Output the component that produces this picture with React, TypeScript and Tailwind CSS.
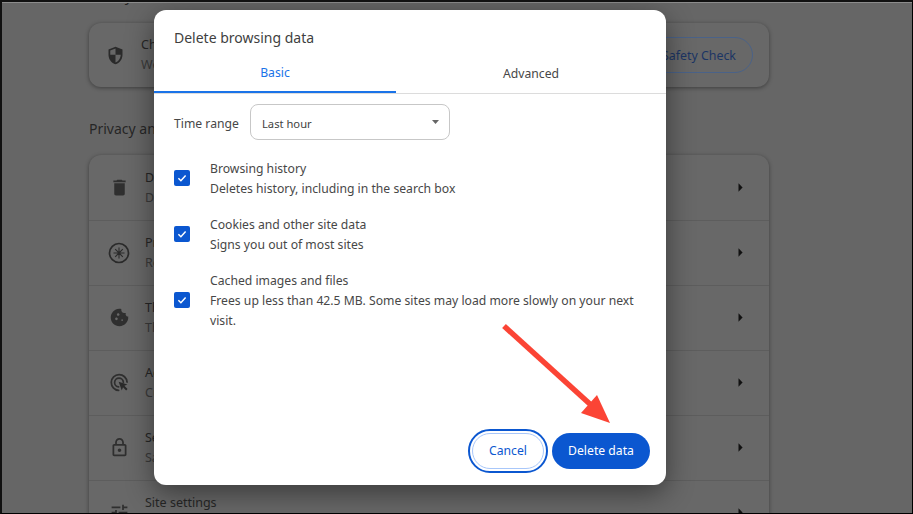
const font = "[font-family:'Noto_Sans','Liberation_Sans',sans-serif]";

function Chevron() {
  return (
    <svg width="5" height="9" viewBox="0 0 5 9" className="mb-px shrink-0">
      <path d="M0.5 0.3 L4.6 4.5 L0.5 8.7 Z" fill="#111111" />
    </svg>
  );
}

const iconPaths: Record<string, string> = {
  trash: "M6 19c0 1.1.9 2 2 2h8c1.1 0 2-.9 2-2V7H6v12zM19 4h-3.5l-1-1h-5l-1 1H5v2h14V4z",
  cookie:
    "M21.95 10.99c-1.79-.03-3.7-1.95-2.68-4.22-2.98 1-5.77-1.59-5.19-4.56C6.95.71 2 6.58 2 12c0 5.52 4.48 10 10 10 5.89 0 10.54-5.08 9.95-11.01zM8.5 15c-.83 0-1.5-.67-1.5-1.5S7.67 12 8.5 12s1.5.67 1.5 1.5S9.33 15 8.5 15zm2-5C9.67 10 9 9.33 9 8.5S9.67 7 10.5 7s1.5.67 1.5 1.5-.67 1.5-1.5 1.5zm4.5 6c-.55 0-1-.45-1-1s.45-1 1-1 1 .45 1 1-.45 1-1 1z",
  lock:
    "M18 8h-1V6c0-2.76-2.24-5-5-5S7 3.24 7 6v2H6c-1.1 0-2 .9-2 2v10c0 1.1.9 2 2 2h12c1.1 0 2-.9 2-2V10c0-1.1-.9-2-2-2zM9 6c0-1.66 1.34-3 3-3s3 1.34 3 3v2H9V6zm9 14H6V10h12v10zm-6-3c1.1 0 2-.9 2-2s-.9-2-2-2-2 .9-2 2 .9 2 2 2z",
  tune:
    "M3 17v2h6v-2H3zM3 5v2h10V5H3zm10 16v-2h8v-2h-8v-2h-2v6h2zM7 9v2H3v2h4v2h2V9H7zm14 4v-2H11v2h10zm-6-4h2V7h4V5h-4V3h-2v6z",
};

function Icon({ name }: { name: string }) {
  if (name === "shield") {
    return (
      <svg width="21" height="21" viewBox="0 0 24 24" fill="none" className="mx-[1.5px]">
        <path d="M12 2 4 5v6.1c0 5 3.4 9.7 8 10.9 4.6-1.2 8-5.9 8-10.9V5l-8-3z" fill="#2a2a2a" />
        <path d="M12 4.1 6 6.4V11h6V4.1zM12 11v8.9c3.2-1 5.6-4.6 6-8.9h-6z" fill="#666666" />
      </svg>
    );
  }
  if (name === "sandbox") {
    return (
      <svg width="24" height="24" viewBox="0 0 24 24" fill="none" stroke="#2a2a2a" className="mb-px">
        <circle cx="12" cy="12" r="9.5" strokeWidth="1.7" />
        <path d="M12 6.5v11M6.5 12h11M8.2 8.2l7.6 7.6M15.8 8.2l-7.6 7.6" strokeWidth="1.1" />
      </svg>
    );
  }
  if (name === "ads") {
    return (
      <svg width="21" height="21" viewBox="0 0 24 24" fill="none" className="mx-[1.5px] mb-px">
        <path
          d="M11 21a9 9 0 1 1 9.6-9.5M11 17a5 5 0 1 1 5.4-5.2"
          stroke="#2f2f2f"
          strokeWidth="2"
          strokeLinecap="round"
        />
        <path d="M11 11l3.6 10 1.4-3.6 3.6 3.6 1.6-1.6-3.6-3.6 3.4-1.4L11 11z" fill="#2a2a2a" />
      </svg>
    );
  }
  return (
    <svg width="21" height="21" viewBox="0 0 24 24" fill="#2f2f2f" className="mx-[1.5px] mb-px">
      <path d={iconPaths[name]} />
    </svg>
  );
}

function SettingsRow({ icon, title, sub }: { icon: string; title: string; sub?: string }) {
  return (
    <div className="flex h-[65px] shrink-0 items-center border-t border-[#5d5d5d] pl-[18px] pr-[26px] first:border-t-0">
      <Icon name={icon} />
      <div className="ml-[14px] flex-1 text-[12.5px] leading-5 text-[#262626]">
        <div>{title}</div>
        {sub && <div className="text-[#3a3a3a]">{sub}</div>}
      </div>
      <Chevron />
    </div>
  );
}

function CheckRow({ title, children }: { title: string; children: React.ReactNode }) {
  return (
    <div className="flex items-center gap-5">
      <div className="mb-[2px] flex h-4 w-4 shrink-0 items-center justify-center rounded-[2px] bg-[#0b57d0]">
        <svg width="12" height="12" viewBox="0 0 12 12" fill="none">
          <path d="M2.4 6.3 4.9 8.7 9.6 3.5" stroke="#ffffff" strokeWidth="1.5" />
        </svg>
      </div>
      <div className="text-[12.2px] leading-5 text-[#474747]">
        <div>{title}</div>
        <div>{children}</div>
      </div>
    </div>
  );
}

export default function App() {
  return (
    <div
      className={`${font} relative h-[514px] w-[913px] overflow-hidden border-t-2 border-r border-b border-l-2 border-t-[#111111] border-r-black border-b-black border-l-[#111111] bg-[#666666]`}
    >
      <div className="h-px bg-[#8c8c8c]" />
      <div className="flex h-full flex-col overflow-hidden pl-[87px] pr-[143px]">
        <div className="-mt-[19px] mb-[17px] h-[22px] text-[15px] leading-[22px] text-[#262626]">Safety check</div>
        <div className="flex h-[64px] shrink-0 items-center rounded-xl bg-[#686868] pl-[14px] pr-4 shadow-[0_1px_4px_rgba(0,0,0,0.4)]">
          <Icon name="shield" />
          <div className="ml-[14px] flex-1 text-[12.5px] leading-5 text-[#262626]">
            <div>Chrome can help keep you safe</div>
            <div className="text-[#3a3a3a]">We'll check for data breaches</div>
          </div>
          <div className="flex h-9 items-center rounded-full border border-[#4a6288] px-4 pt-[3px] text-[12.4px] text-[#1c3564]">
            Go to Safety Check
          </div>
        </div>
        <div className="mt-[30px] h-[38px] shrink-0 text-[14px] leading-6 text-[#262626]">Privacy and security</div>
        <div className="shrink-0 rounded-xl bg-[#686868] shadow-[0_1px_4px_rgba(0,0,0,0.4)]">
          <SettingsRow icon="trash" title="Delete browsing data" sub="Delete history, cookies, cache, and more" />
          <SettingsRow icon="sandbox" title="Privacy Guide" sub="Review key privacy and security controls" />
          <SettingsRow icon="cookie" title="Third-party cookies" sub="Third-party cookies are blocked in Incognito mode" />
          <SettingsRow icon="ads" title="Ad privacy" sub="Customize the info used by sites to show you ads" />
          <SettingsRow icon="lock" title="Security" sub="Safe Browsing and other security settings" />
          <SettingsRow icon="tune" title="Site settings" sub="Controls what information sites can use and show" />
        </div>
      </div>

      <div className="absolute left-[152px] top-[8px] flex h-[475px] w-[512px] flex-col rounded-xl bg-white shadow-[0_8px_28px_rgba(0,0,0,0.45)]">
        <div className="pl-5 pt-[18px] text-[14px] leading-5 text-[#3f3f3f]">Delete browsing data</div>
        <div className="mt-[5px] flex h-[41px] border-b border-[#dcdcdc] text-[12.2px]">
          <div className="flex w-[242px] items-center justify-center border-b-2 border-[#1a73e8] pt-[3px] text-[#1a73e8]">Basic</div>
          <div className="flex flex-1 items-center justify-center pt-[2px] text-[#474747]">Advanced</div>
        </div>
        <div className="flex items-center pl-5 pt-[10px] text-[12.2px] text-[#474747]">
          <div className="w-[76px] pt-[5px]">Time range</div>
          <div className="relative flex h-9 w-[200px] items-center rounded-lg border border-[#c7c7c7] pl-[11px] pt-[5px] text-[11.2px] text-[#3f3f3f]">
            Last hour
            <svg width="7" height="4" viewBox="0 0 7 4" className="absolute right-[10px] top-[15px]">
              <path d="M0 0h7L3.5 4z" fill="#666666" />
            </svg>
          </div>
        </div>
        <div className="flex flex-col gap-4 pl-5 pr-[26px] pt-[19px]">
          <CheckRow title="Browsing history">Deletes history, including in the search box</CheckRow>
          <CheckRow title="Cookies and other site data">Signs you out of most sites</CheckRow>
          <CheckRow title="Cached images and files">
            Frees up less than 42.5 MB. Some sites may load more slowly on your next visit.
          </CheckRow>
        </div>
        <div className="mt-auto flex items-center justify-end gap-1 pb-3 pr-4 text-[12.2px]">
          <div className="flex h-[44px] w-[80px] items-center justify-center rounded-full border-2 border-[#0b57d0] bg-white text-[#0b57d0]">
            <div className="flex h-9 w-[72px] items-center justify-center rounded-full border border-[#a8c7fa]">Cancel</div>
          </div>
          <div className="flex h-9 w-[98px] items-center justify-center rounded-full bg-[#0b57d0] text-white">Delete data</div>
        </div>
      </div>

      <svg
        width="913"
        height="514"
        viewBox="0 0 913 514"
        className="pointer-events-none absolute -left-[2px] -top-[2px]"
      >
        <path d="M504 326 L591 405" stroke="#fb4435" strokeWidth="5.5" />
        <path d="M597 395 L581 413 L610 423 Z" fill="#fb4435" />
      </svg>
    </div>
  );
}
